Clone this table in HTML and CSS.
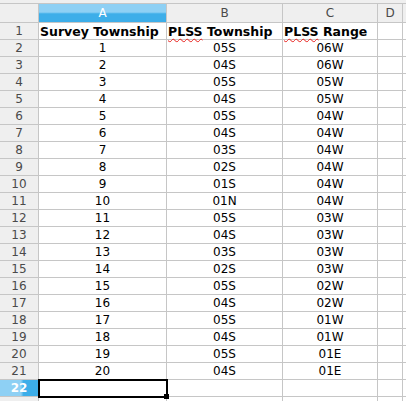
FILE: index.html
```html
<!DOCTYPE html>
<html>
<head>
<meta charset="utf-8">
<link rel="stylesheet" href="styles.css">
</head>
<body>
<div class="topstrip"></div>
<div class="sheet">
  <div class="corner"></div>
  <div class="colhdr active">A</div>
  <div class="colhdr">B</div>
  <div class="colhdr">C</div>
  <div class="colhdr">D</div>
  <div class="colhdr rest"></div>

  <div class="rowhdr">1</div>
  <div class="cell head"><span>Survey Township</span></div>
  <div class="cell head"><span><span class="spell">PLSS</span> Township</span></div>
  <div class="cell head"><span><span class="spell">PLSS</span> Range</span></div>
  <div class="cell"></div>
  <div class="cell rest"></div>

  <div class="rowhdr">2</div><div class="cell">1</div><div class="cell">05S</div><div class="cell">06W</div><div class="cell"></div><div class="cell rest"></div>
  <div class="rowhdr">3</div><div class="cell">2</div><div class="cell">04S</div><div class="cell">06W</div><div class="cell"></div><div class="cell rest"></div>
  <div class="rowhdr">4</div><div class="cell">3</div><div class="cell">05S</div><div class="cell">05W</div><div class="cell"></div><div class="cell rest"></div>
  <div class="rowhdr">5</div><div class="cell">4</div><div class="cell">04S</div><div class="cell">05W</div><div class="cell"></div><div class="cell rest"></div>
  <div class="rowhdr">6</div><div class="cell">5</div><div class="cell">05S</div><div class="cell">04W</div><div class="cell"></div><div class="cell rest"></div>
  <div class="rowhdr">7</div><div class="cell">6</div><div class="cell">04S</div><div class="cell">04W</div><div class="cell"></div><div class="cell rest"></div>
  <div class="rowhdr">8</div><div class="cell">7</div><div class="cell">03S</div><div class="cell">04W</div><div class="cell"></div><div class="cell rest"></div>
  <div class="rowhdr">9</div><div class="cell">8</div><div class="cell">02S</div><div class="cell">04W</div><div class="cell"></div><div class="cell rest"></div>
  <div class="rowhdr">10</div><div class="cell">9</div><div class="cell">01S</div><div class="cell">04W</div><div class="cell"></div><div class="cell rest"></div>
  <div class="rowhdr">11</div><div class="cell">10</div><div class="cell">01N</div><div class="cell">04W</div><div class="cell"></div><div class="cell rest"></div>
  <div class="rowhdr">12</div><div class="cell">11</div><div class="cell">05S</div><div class="cell">03W</div><div class="cell"></div><div class="cell rest"></div>
  <div class="rowhdr">13</div><div class="cell">12</div><div class="cell">04S</div><div class="cell">03W</div><div class="cell"></div><div class="cell rest"></div>
  <div class="rowhdr">14</div><div class="cell">13</div><div class="cell">03S</div><div class="cell">03W</div><div class="cell"></div><div class="cell rest"></div>
  <div class="rowhdr">15</div><div class="cell">14</div><div class="cell">02S</div><div class="cell">03W</div><div class="cell"></div><div class="cell rest"></div>
  <div class="rowhdr">16</div><div class="cell">15</div><div class="cell">05S</div><div class="cell">02W</div><div class="cell"></div><div class="cell rest"></div>
  <div class="rowhdr">17</div><div class="cell">16</div><div class="cell">04S</div><div class="cell">02W</div><div class="cell"></div><div class="cell rest"></div>
  <div class="rowhdr">18</div><div class="cell">17</div><div class="cell">05S</div><div class="cell">01W</div><div class="cell"></div><div class="cell rest"></div>
  <div class="rowhdr">19</div><div class="cell">18</div><div class="cell">04S</div><div class="cell">01W</div><div class="cell"></div><div class="cell rest"></div>
  <div class="rowhdr">20</div><div class="cell">19</div><div class="cell">05S</div><div class="cell">01E</div><div class="cell"></div><div class="cell rest"></div>
  <div class="rowhdr">21</div><div class="cell">20</div><div class="cell">04S</div><div class="cell">01E</div><div class="cell"></div><div class="cell rest"></div>
  <div class="rowhdr active">22</div><div class="cell selected"></div><div class="cell"></div><div class="cell"></div><div class="cell"></div><div class="cell rest"></div>
  <div class="rowhdr"></div><div class="cell"></div><div class="cell"></div><div class="cell"></div><div class="cell"></div><div class="cell rest"></div>
</div>
</body>
</html>
```

FILE: styles.css
```css
html, body {
  margin: 0;
  padding: 0;
  background: #ffffff;
  overflow: hidden;
}
body {
  width: 406px;
  height: 401px;
  font-family: "DejaVu Sans", sans-serif;
}
.topstrip {
  height: 3px;
  background: #efefef;
  border-bottom: 1px solid #c6c6c6;
}
.sheet {
  display: grid;
  grid-template-columns: 39px 128px 116px 95px 25px 1fr;
  grid-template-rows: 19px;
  grid-auto-rows: 17px;
}
.corner, .colhdr, .rowhdr {
  background: #efefef;
  border-right: 1px solid #c6c6c6;
  border-bottom: 1px solid #c6c6c6;
  color: #4a4a4a;
  font-size: 12px;
  display: flex;
  align-items: center;
  justify-content: center;
  box-sizing: border-box;
}
.colhdr.rest, .cell.rest {
  border-right: none;
}
.colhdr.active {
  background: linear-gradient(to bottom, #8ed0f4 0, #8ed0f4 45%, #3daee9 55%, #3daee9 100%);
  color: #ffffff;
}
.rowhdr.active {
  background: linear-gradient(to right, #8ed0f4 0, #8ed0f4 55%, #3daee9 62%, #3daee9 100%);
  color: #ffffff;
  font-weight: bold;
}
.cell {
  border-right: 1px solid #c6c6c6;
  border-bottom: 1px solid #c6c6c6;
  box-sizing: border-box;
  font-size: 12px;
  color: #000;
  display: flex;
  align-items: center;
  justify-content: center;
  white-space: nowrap;
  overflow: hidden;
}
.cell.head {
  justify-content: flex-start;
  padding-left: 1px;
  font-size: 12.5px;
  font-weight: bold;
  overflow: visible;
}
.spell {
  text-decoration-line: underline;
  text-decoration-style: wavy;
  text-decoration-color: #e8201c;
  text-decoration-thickness: 1px;
  text-decoration-skip-ink: none;
  text-underline-offset: 2px;
}
.cell.selected {
  position: relative;
  overflow: visible;
  outline: 2px solid #000;
  outline-offset: -1px;
  z-index: 1;
}
.cell.selected::after {
  content: "";
  position: absolute;
  right: -3px;
  bottom: -3px;
  width: 5px;
  height: 5px;
  background: #000;
}
```
